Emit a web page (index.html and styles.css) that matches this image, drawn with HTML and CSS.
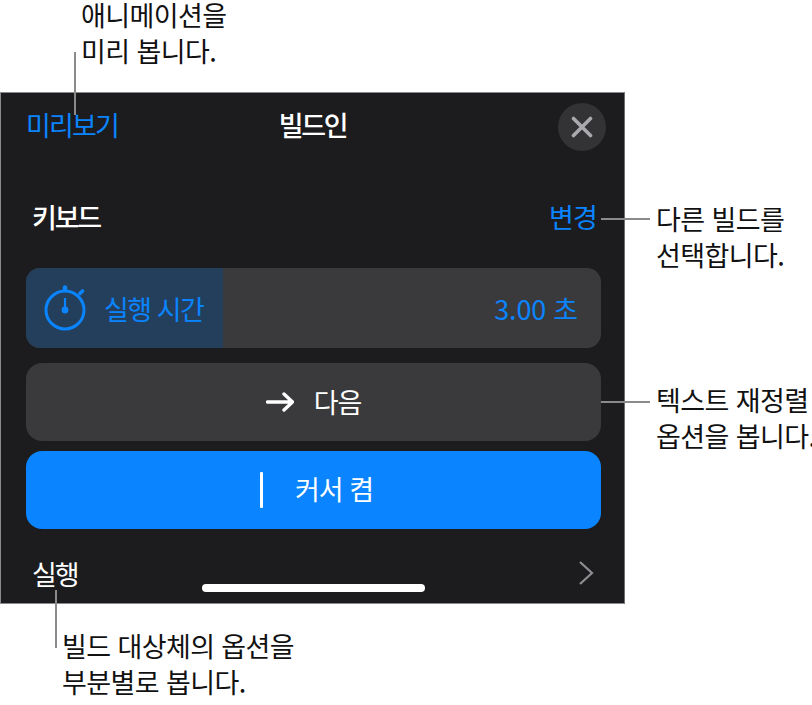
FILE: index.html
```html
<!DOCTYPE html>
<html lang="ko">
<head>
<meta charset="utf-8">
<title>빌드인</title>
<link rel="stylesheet" href="styles.css">
</head>
<body>
<main class="canvas">
  <section class="panel">
    <header class="top">
      <span class="link">미리보기</span>
      <h1 class="title">빌드인</h1>
      <span class="close-wrap">
        <span class="close">
          <svg width="22" height="22" viewBox="0 0 22 22"><path d="M2.5 2.5 19.500 19.500M19.500 2.500 2.500 19.500" stroke="#a9a9ae" stroke-width="3.600" stroke-linecap="round" fill="none"/></svg>
        </span>
      </span>
    </header>
    <div class="effect">
      <strong class="effect-name">키보드</strong>
      <span class="change">변경</span>
    </div>
    <div class="slider">
      <div class="slider-fill">
        <svg width="44" height="46" viewBox="0 0 44 46"><g fill="none" stroke="#0a84ff"><circle cx="22" cy="25" r="19" stroke-width="3"/><path d="M22 13V24" stroke-width="2.200"/><path d="M22 2.500V5" stroke-width="4.500" stroke-linecap="round"/><path d="M37 8.500 39.500 6" stroke-width="3.600" stroke-linecap="round"/></g><circle cx="22" cy="25" r="3.400" fill="#0a84ff"/></svg>
        <span class="slider-label">실행 시간</span>
      </div>
      <span class="slider-value">3.00 초</span>
    </div>
    <div class="btn btn-next">
      <svg width="28" height="20" viewBox="0 0 28 20"><path d="M1.500 10H26.500M18 2 26.500 10 18 18" fill="none" stroke="#fff" stroke-width="3.400" stroke-linecap="round" stroke-linejoin="round"/></svg>
      <span class="btn-text">다음</span>
    </div>
    <div class="btn btn-cursor">
      <span class="caret"></span>
      <span class="btn-text">커서 켬</span>
    </div>
    <div class="delivery">
      <span>실행</span>
      <svg width="16" height="26" viewBox="0 0 16 26"><path d="M2 2 14 13 2 24" fill="none" stroke="#8e8e93" stroke-width="2.200"/></svg>
    </div>
    <div class="home-bar"></div>
  </section>
  <p class="note note-preview">애니메이션을<br>미리 봅니다.</p>
  <p class="note note-change">다른 빌드를<br>선택합니다.</p>
  <p class="note note-reflow">텍스트 재정렬<br>옵션을 봅니다.</p>
  <p class="note note-parts">빌드 대상체의 옵션을<br>부분별로 봅니다.</p>
  <span class="leader leader-preview"></span>
  <span class="leader leader-change"></span>
  <span class="leader leader-reflow"></span>
  <span class="leader leader-parts"></span>
</main>
</body>
</html>
```
FILE: styles.css
```css
* { box-sizing: border-box; }
html, body { margin: 0; padding: 0; background: #fff; }
body { font-family: "Noto Sans CJK KR", "Noto Sans", sans-serif; overflow: hidden; }
.canvas { position: relative; width: 812px; height: 705px; padding-top: 92px; overflow: hidden; }

.panel {
  position: relative;
  width: 625px;
  height: 512px;
  background: #1c1c1e;
  border: 1px solid #8a8a8c;
  border-right-color: #6e6e70;
  padding: 0 23px 0 25px;
  color: #fff;
  display: flex;
  flex-direction: column;
}

.top {
  display: grid;
  grid-template-columns: 1fr auto 1fr;
  align-items: center;
  height: 64px;
  margin-top: 2px;
  margin-right: -5px;
}
.link { color: #0a84ff; font-size: 27px; letter-spacing: -1.800px; line-height: 36px; margin-bottom: 4px; }
.title { margin: 0 7px 4px 0; font-size: 27px; font-weight: 500; letter-spacing: -2.300px; line-height: 36px; }
.close-wrap { justify-self: end; }
.close {
  width: 48px; height: 48px; border-radius: 50%;
  background: #333336;
  display: flex; align-items: center; justify-content: center;
}

.effect {
  display: flex;
  justify-content: space-between;
  align-items: center;
  height: 36px;
  margin-top: 39px;
  padding-left: 6px;
}
.effect-name { font-size: 27px; font-weight: 500; letter-spacing: -2.200px; }
.change { color: #0a84ff; font-size: 27px; letter-spacing: -0.800px; margin-right: 4px; }

.slider {
  display: flex;
  justify-content: space-between;
  align-items: center;
  height: 80px;
  margin-top: 34px;
  border-radius: 14px;
  background: #3a3a3c;
  overflow: hidden;
  color: #0a84ff;
  font-size: 27px;
}
.slider-fill {
  display: flex;
  align-items: center;
  gap: 17px;
  width: 197px;
  height: 100%;
  padding-left: 17px;
  background: #243f5b;
}
.slider-label { white-space: nowrap; letter-spacing: -1.500px; }
.slider-value { padding-right: 23px; letter-spacing: -0.200px; }

.btn {
  display: flex;
  align-items: center;
  justify-content: center;
  height: 78px;
  border-radius: 16px;
  font-size: 27px;
  letter-spacing: -1px;
}
.btn-next { margin-top: 15px; gap: 20px; background: #3a3a3c; }
.btn-next .btn-text { margin-bottom: 2px; }
.btn-cursor { margin-top: 10px; gap: 32px; padding-left: 6px; background: #0a84ff; }
.btn-cursor .btn-text { margin-bottom: 4px; }
.caret { width: 3px; height: 36px; background: #fff; border-radius: 1px; }

.delivery {
  display: flex;
  justify-content: space-between;
  align-items: center;
  height: 36px;
  margin-top: 26px;
  padding: 0 7px 0 6px;
  font-size: 27px;
  letter-spacing: -2.200px;
}

.home-bar {
  position: absolute;
  left: 201px;
  top: 491px;
  width: 223px;
  height: 8px;
  border-radius: 4px;
  background: #fff;
}

.note {
  position: absolute;
  margin: 0;
  font-size: 27px;
  line-height: 36px;
  letter-spacing: -0.600px;
  color: #111;
  white-space: nowrap;
}
.note-preview { left: 81px; top: -3px; }
.note-change { left: 656px; top: 201px; }
.note-reflow { left: 656px; top: 382px; }
.note-parts { left: 62px; top: 628px; }

.leader { position: absolute; background: #8a8a8a; }
.leader-preview { left: 74px; top: 52px; width: 2px; height: 63px; }
.leader-change { left: 601px; top: 218px; width: 49px; height: 2px; }
.leader-reflow { left: 601px; top: 401px; width: 49px; height: 2px; }
.leader-parts { left: 55px; top: 590px; width: 2px; height: 58px; }
```
